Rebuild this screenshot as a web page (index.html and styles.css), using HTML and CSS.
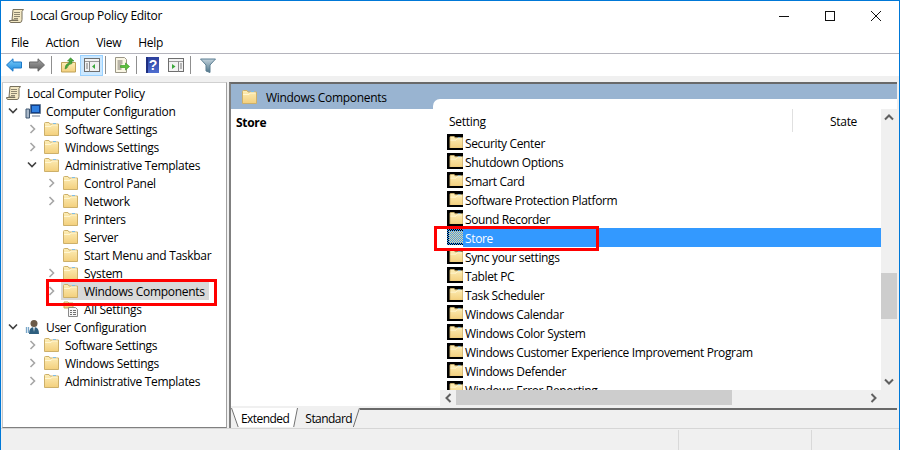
FILE: index.html
```html
<!DOCTYPE html>
<html lang="en">
<head>
<meta charset="utf-8">
<title>Local Group Policy Editor</title>
<link rel="stylesheet" href="styles.css">
</head>
<body>
<svg class="defs" aria-hidden="true">
  <defs>
    <linearGradient id="fg" x1="0" y1="0" x2="0" y2="1"><stop offset="0" stop-color="#fdeeb8"/><stop offset="1" stop-color="#f3cf7c"/></linearGradient>
    <linearGradient id="bk" x1="0" y1="0" x2="0" y2="1"><stop offset="0" stop-color="#7fd0fb"/><stop offset="1" stop-color="#1b87dc"/></linearGradient>
    <linearGradient id="fw" x1="0" y1="0" x2="0" y2="1"><stop offset="0" stop-color="#a6a6a6"/><stop offset="1" stop-color="#5e5e5e"/></linearGradient>
    <linearGradient id="hp" x1="0" y1="0" x2="0" y2="1"><stop offset="0" stop-color="#2b3f9c"/><stop offset="1" stop-color="#4f6ed0"/></linearGradient>
    <linearGradient id="ft" x1="0" y1="0" x2="0" y2="1"><stop offset="0" stop-color="#c3d3dd"/><stop offset="1" stop-color="#4d7488"/></linearGradient>
    <pattern id="dith" width="2" height="2" patternUnits="userSpaceOnUse"><rect width="2" height="2" fill="#3399ff"/><rect width="1" height="1" fill="#f5d98a"/><rect x="1" y="1" width="1" height="1" fill="#f5d98a"/></pattern>
    <pattern id="dithk" width="2" height="2" patternUnits="userSpaceOnUse"><rect width="2" height="2" fill="#3399ff"/><rect width="1" height="1" fill="#000"/><rect x="1" y="1" width="1" height="1" fill="#000"/></pattern>
    <g id="folder">
      <path d="M.5 14.500V2.500q0-1 1-1h3.500l1 1.500h8.500v11.500z" fill="url(#fg)" stroke="#cdb06a"/>
      <path d="M1 5.500h6l1-1.500h5.500" fill="none" stroke="#fff6d2"/>
      <path d="M9 2h3v1H9z" fill="#7fbde8"/>
    </g>
    <symbol id="chev-r" viewBox="0 0 8 10"><path d="M1.500 1l4 4-4 4" fill="none" stroke="#a6a6a6" stroke-width="1.600"/></symbol>
    <symbol id="chev-d" viewBox="0 0 10 8"><path d="M1 1.500l4 4 4-4" fill="none" stroke="#404040" stroke-width="1.600"/></symbol>
    <symbol id="scroll" viewBox="0 0 16 16">
      <path d="M4 1.500h10.500l-1.500 2v8q0 3-2 3H2q-1.500 0-1.500-2h8.500V12H3z" fill="#f3e8c4" stroke="#77705c"/>
      <path d="M5 4.500h6M5 6.500h6M5 8.500h6M5 10.500h4" stroke="#8d8670"/>
    </symbol>
  </defs>
</svg>

<div class="window">
  <header class="titlebar">
    <svg class="title-icon"><use href="#scroll"/></svg>
    <span class="title-text">Local Group Policy Editor</span>
    <div class="caption">
      <span class="cap-btn"><svg width="12" height="12"><path d="M1 6.500h10" stroke="#111"/></svg></span>
      <span class="cap-btn"><svg width="12" height="12"><rect x="1.500" y="1.500" width="9" height="9" fill="none" stroke="#111"/></svg></span>
      <span class="cap-btn"><svg width="12" height="12"><path d="M1 1l10 10M11 1L1 11" stroke="#111"/></svg></span>
    </div>
  </header>

  <nav class="menubar">
    <span class="menu-item">File</span>
    <span class="menu-item">Action</span>
    <span class="menu-item">View</span>
    <span class="menu-item">Help</span>
  </nav>

  <div class="toolbar">
    <span class="tool"><svg width="16" height="14"><path d="M.5 7L7 .8V4h8.500v6H7v3.200z" fill="url(#bk)" stroke="#1c78c8"/></svg></span>
    <span class="tool"><svg width="16" height="14"><path d="M15.500 7L9 .8V4H.5v6H9v3.200z" fill="url(#fw)" stroke="#666"/></svg></span>
    <i class="tool-sep"></i>
    <span class="tool t-up"><svg width="15" height="16"><path d="M.5 15V5.500h14V15z" fill="url(#fg)" stroke="#c0a258"/><path d="M4 12q0-5 4-6V3.500L6.500 4 9.500.8 13 4h-2v2.500Q7 7 6 11z" fill="#4aa63c" stroke="#3a8a30" stroke-width=".6"/></svg></span>
    <span class="tool t-active"><svg width="16" height="14"><rect x=".5" y=".5" width="15" height="13" fill="#f2f2f2" stroke="#6e6e6e"/><path d="M1 3.500h14" stroke="#9a9a9a"/><path d="M5.500 3.500v10" stroke="#8a8a8a"/><path d="M2 6h2M2 8h2M2 10h2" stroke="#7a7a7a"/><path d="M11 6v5L8 8.500z" fill="#3aa83a"/></svg></span>
    <i class="tool-sep s-narrow"></i>
    <span class="tool t-export"><svg width="16" height="16"><path d="M1.500.5h9l2 2v13h-11z" fill="#faf6e4" stroke="#9a9686"/><path d="M3.500 4h5M3.500 6h5M3.500 8h4M3.500 10h4M3.500 12h4" stroke="#77736a"/><path d="M6.500 8.500h5V6l4 3.500-4 3.500v-2.500h-5z" fill="#5cc13c" stroke="#3e9c2a" stroke-width=".7"/></svg></span>
    <i class="tool-sep"></i>
    <span class="tool t-help"><svg width="13" height="16"><rect width="13" height="16" fill="url(#hp)"/><path d="M0 0h2v16H0z" fill="#1e2f80"/><text class="help-q" x="7" y="13">?</text></svg></span>
    <span class="tool t-show"><svg width="16" height="14"><rect x=".5" y=".5" width="15" height="13" fill="#f2f2f2" stroke="#6e6e6e"/><path d="M1 3.500h14" stroke="#9a9a9a"/><path d="M10.500 3.500v10" stroke="#8a8a8a"/><path d="M12 6h2M12 8h2M12 10h2" stroke="#7a7a7a"/><path d="M4 6v5l3.500-2.500z" fill="#3aa83a"/></svg></span>
    <i class="tool-sep"></i>
    <span class="tool t-filter"><svg width="16" height="15"><path d="M.5 1h15l-5.500 6v7.500L6 13V7z" fill="url(#ft)" stroke="#5d7f92"/></svg></span>
  </div>

  <main class="workspace">
    <aside class="tree">
      <div class="node l0"><svg class="ico"><use href="#scroll"/></svg><span>Local Computer Policy</span></div>
      <div class="node l1"><svg class="twist"><use href="#chev-d"/></svg><svg class="ico" viewBox="0 0 16 16"><path d="M5.500 1.500h10v9h-10z" fill="#103f8c" stroke="#6b7f96"/><path d="M7 3h7v6H7z" fill="#2f7fe0"/><path d="M7 12h8v2H7z" fill="#b5bcc6"/><path d="M1 6h3.500v9H1z" fill="#a9b8c9" stroke="#3f5670"/></svg><span>Computer Configuration</span></div>
      <div class="node l2"><svg class="twist-r"><use href="#chev-r"/></svg><svg class="ico" viewBox="0 0 16 16"><use href="#folder"/></svg><span>Software Settings</span></div>
      <div class="node l2"><svg class="twist-r"><use href="#chev-r"/></svg><svg class="ico" viewBox="0 0 16 16"><use href="#folder"/></svg><span>Windows Settings</span></div>
      <div class="node l2"><svg class="twist"><use href="#chev-d"/></svg><svg class="ico" viewBox="0 0 16 16"><use href="#folder"/></svg><span>Administrative Templates</span></div>
      <div class="node l3"><svg class="twist-r"><use href="#chev-r"/></svg><svg class="ico" viewBox="0 0 16 16"><use href="#folder"/></svg><span>Control Panel</span></div>
      <div class="node l3"><svg class="twist-r"><use href="#chev-r"/></svg><svg class="ico" viewBox="0 0 16 16"><use href="#folder"/></svg><span>Network</span></div>
      <div class="node l3 leaf"><svg class="ico" viewBox="0 0 16 16"><use href="#folder"/></svg><span>Printers</span></div>
      <div class="node l3 leaf"><svg class="ico" viewBox="0 0 16 16"><use href="#folder"/></svg><span>Server</span></div>
      <div class="node l3 leaf"><svg class="ico" viewBox="0 0 16 16"><use href="#folder"/></svg><span>Start Menu and Taskbar</span></div>
      <div class="node l3"><svg class="twist-r"><use href="#chev-r"/></svg><svg class="ico" viewBox="0 0 16 16"><use href="#folder"/></svg><span>System</span></div>
      <div class="node l3 current"><svg class="twist-r"><use href="#chev-r"/></svg><div class="current-band"><svg class="ico" viewBox="0 0 16 16"><use href="#folder"/></svg><span>Windows Components</span></div></div>
      <div class="node l3 leaf"><svg class="ico" viewBox="0 0 16 16"><path d="M1 7V1h4l1 1h4v5z" fill="url(#fg)" stroke="#c8a95e"/><path d="M5.500 6.500h7l2 2v7h-9z" fill="#f7f7f7" stroke="#8a8a8a"/><path d="M7 9.500h2M10 9.500h3M7 11.500h2M10 11.500h3M7 13.500h2M10 13.500h3" stroke="#707070"/></svg><span>All Settings</span></div>
      <div class="node l1"><svg class="twist"><use href="#chev-d"/></svg><svg class="ico" viewBox="0 0 16 16"><circle cx="9" cy="4.500" r="3.500" fill="#6b5a48"/><path d="M4 15q0-7 5-7t5 7z" fill="#2f5f7f"/><path d="M1.500 8v6M3.500 8v6" stroke="#7aa7c9" stroke-width="1.300"/><path d="M8 8h2l-1 5z" fill="#dfe8ee"/></svg><span>User Configuration</span></div>
      <div class="node l2"><svg class="twist-r"><use href="#chev-r"/></svg><svg class="ico" viewBox="0 0 16 16"><use href="#folder"/></svg><span>Software Settings</span></div>
      <div class="node l2"><svg class="twist-r"><use href="#chev-r"/></svg><svg class="ico" viewBox="0 0 16 16"><use href="#folder"/></svg><span>Windows Settings</span></div>
      <div class="node l2"><svg class="twist-r"><use href="#chev-r"/></svg><svg class="ico" viewBox="0 0 16 16"><use href="#folder"/></svg><span>Administrative Templates</span></div>
    </aside>

    <section class="pane">
      <div class="pane-body">
        <div class="intro">
          <div class="band"><svg class="band-ico" viewBox="0 0 16 16"><use href="#folder"/></svg><span>Windows Components</span></div>
          <div class="intro-body"><strong>Store</strong></div>
        </div>
        <div class="results">
          <div class="results-main">
            <div class="listing">
              <div class="list-head"><span class="col-setting">Setting</span><span class="col-state">State</span></div>
              <div class="rows">
                <div class="row"><span class="row-ico"><svg viewBox="0 1 14 13"><use href="#folder"/></svg></span><span>Security Center</span></div>
                <div class="row"><span class="row-ico"><svg viewBox="0 1 14 13"><use href="#folder"/></svg></span><span>Shutdown Options</span></div>
                <div class="row"><span class="row-ico"><svg viewBox="0 1 14 13"><use href="#folder"/></svg></span><span>Smart Card</span></div>
                <div class="row"><span class="row-ico"><svg viewBox="0 1 14 13"><use href="#folder"/></svg></span><span>Software Protection Platform</span></div>
                <div class="row"><span class="row-ico"><svg viewBox="0 1 14 13"><use href="#folder"/></svg></span><span>Sound Recorder</span></div>
                <div class="row selected"><span class="row-ico sel-ico"><svg width="16" height="16"><rect width="16" height="16" fill="url(#dithk)"/><rect x="2" y="2" width="14" height="12" fill="url(#dith)"/></svg></span><span class="sel-text">Store</span></div>
                <div class="row"><span class="row-ico"><svg viewBox="0 1 14 13"><use href="#folder"/></svg></span><span>Sync your settings</span></div>
                <div class="row"><span class="row-ico"><svg viewBox="0 1 14 13"><use href="#folder"/></svg></span><span>Tablet PC</span></div>
                <div class="row"><span class="row-ico"><svg viewBox="0 1 14 13"><use href="#folder"/></svg></span><span>Task Scheduler</span></div>
                <div class="row"><span class="row-ico"><svg viewBox="0 1 14 13"><use href="#folder"/></svg></span><span>Windows Calendar</span></div>
                <div class="row"><span class="row-ico"><svg viewBox="0 1 14 13"><use href="#folder"/></svg></span><span>Windows Color System</span></div>
                <div class="row"><span class="row-ico"><svg viewBox="0 1 14 13"><use href="#folder"/></svg></span><span>Windows Customer Experience Improvement Program</span></div>
                <div class="row"><span class="row-ico"><svg viewBox="0 1 14 13"><use href="#folder"/></svg></span><span>Windows Defender</span></div>
                <div class="row"><span class="row-ico"><svg viewBox="0 1 14 13"><use href="#folder"/></svg></span><span>Windows Error Reporting</span></div>
              </div>
            </div>
            <div class="vscroll">
              <span class="sb-btn"><svg width="10" height="7"><path d="M1 5.500l4-4 4 4" fill="none" stroke="#606060" stroke-width="2"/></svg></span>
              <i class="vs-before"></i>
              <i class="vs-thumb"></i>
              <i class="vs-after"></i>
              <span class="sb-btn"><svg width="10" height="7"><path d="M1 1.500l4 4 4-4" fill="none" stroke="#606060" stroke-width="2"/></svg></span>
            </div>
          </div>
          <div class="hs-wrap">
            <div class="hscroll">
              <span class="sb-btn-h"><svg width="7" height="10"><path d="M5.500 1l-4 4 4 4" fill="none" stroke="#606060" stroke-width="2"/></svg></span>
              <i class="hs-thumb"></i>
              <i class="hs-rest"></i>
              <span class="sb-btn-h"><svg width="7" height="10"><path d="M1.500 1l4 4-4 4" fill="none" stroke="#606060" stroke-width="2"/></svg></span>
            </div>
          </div>
        </div>
      </div>
      <div class="tabs">
        <div class="tab active">
          <svg class="slant" width="8" height="20"><path d="M8 0H0l7 20h1z" fill="#fff"/><path d="M.5 0l7 20" stroke="#707070"/></svg>
          <span>Extended</span>
          <svg class="slant" width="5" height="20"><path d="M0 0h5l-4 20H0z" fill="#fff"/><path d="M4.500 0l-4 20" stroke="#707070"/></svg>
        </div>
        <div class="tab">
          <span class="std">Standard</span>
          <svg class="slant" width="8" height="20"><path d="M7.500 0L1 20" stroke="#707070"/></svg>
        </div>
        <div class="tab-rest"></div>
      </div>
    </section>
  </main>

  <footer class="statusbar">
    <div class="st-main"></div>
    <div class="st-mid"></div>
    <div class="st-end"></div>
  </footer>
</div>

<div class="callout callout-tree"></div>
<div class="callout callout-list"></div>
</body>
</html>
```
FILE: styles.css
```css
* { box-sizing: border-box; }
html, body { margin: 0; padding: 0; width: 900px; height: 450px; overflow: hidden; }
body {
  position: relative;
  background: #fff;
  color: #000;
  font-family: "Open Sans", "Liberation Sans", sans-serif;
  font-size: 12px;
  letter-spacing: -0.3px;
}
.defs { position: absolute; width: 0; height: 0; }

.window {
  width: 900px;
  height: 450px;
  display: flex;
  flex-direction: column;
  border: 1px solid #0078d7;
  border-bottom: 0;
}

/* title */
.titlebar { height: 29px; display: flex; align-items: center; padding-left: 8px; flex: none; }
.title-icon { width: 16px; height: 16px; margin-right: 5px; }
.title-text { flex: 1; }
.caption { display: flex; height: 29px; }
.cap-btn { width: 46px; display: flex; align-items: center; justify-content: center; }

/* menu */
.menubar { height: 23px; flex: none; display: flex; align-items: center; padding-left: 3px; padding-top: 1px; }
.menu-item { padding: 0 7px; margin-right: 3px; }

/* toolbar */
.toolbar {
  height: 23px;
  flex: none;
  display: flex;
  align-items: center;
  border-top: 1px solid #b4b4bc;
  padding-left: 5px;
}
.tool { display: flex; align-items: center; justify-content: center; width: 16px; height: 16px; margin-right: 7px; }
.tool:nth-child(2) { margin-right: 6px; }
.tool-sep { width: 1px; height: 18px; background: #8f8f8f; flex: none; margin-right: 9px; }
.tool-sep.s-narrow { margin-right: 8px; }
.t-up { width: 15px; margin-right: 4px; }
.t-active {
  width: 23px;
  height: 21px;
  background: #cce8ff;
  border: 1px solid #99d1ff;
  margin-right: 2px;
}
.t-export { margin-right: 6px; }
.t-help { width: 13px; margin-right: 9px; }
.t-show { margin-right: 6px; }
.t-filter { margin: 0; }
.help-q { fill: #fff; font: bold 14px "Liberation Sans", sans-serif; text-anchor: middle; }

/* workspace */
.workspace {
  flex: 1;
  min-height: 0;
  display: flex;
  background: #f0f0f0;
  padding: 6px 2px 0 1px;
  gap: 2px;
}

/* tree */
.tree {
  width: 225px;
  flex: none;
  background: #fff;
  border: 1px solid #a0a0a0;
  border-top-color: #d0d0d0;
  border-left-color: #c8c8c8;
  border-bottom-color: #808080;
  padding-top: 1px;
}
.node { height: 18px; display: flex; align-items: center; white-space: nowrap; }
.node span { padding-top: 1px; }
.ico { width: 16px; height: 16px; flex: none; margin-right: 5px; }
.twist { width: 10px; height: 8px; flex: none; margin-right: 7px; }
.twist-r { width: 8px; height: 10px; flex: none; margin-right: 7px; }
.l0 { padding-left: 3px; }
.l1 { padding-left: 5px; }
.l2 { padding-left: 26px; }
.l2 .twist { margin-left: -2px; }
.l3 { padding-left: 45px; }
.leaf { padding-left: 60px; }
.current-band { display: flex; align-items: center; height: 18px; background: #d9d9d9; margin-left: -2px; padding-left: 2px; padding-right: 4px; }

/* pane */
.pane {
  flex: 1;
  min-width: 0;
  display: flex;
  flex-direction: column;
  border-top: 2px solid #696969;
  border-left: 2px solid #808080;
  background: #f0f0f0;
}
.pane-body { height: 322px; flex: none; display: flex; background: #99b4d1; }
.intro { width: 202px; flex: none; display: flex; flex-direction: column; }
.band { height: 25px; flex: none; display: flex; align-items: center; padding-left: 11px; padding-top: 1px; }
.band-ico { width: 16px; height: 16px; margin-right: 8px; }
.intro-body { flex: 1; background: #fff; padding: 5px 5px; }
.intro-body strong { font-weight: 700; }

.results { flex: 1; min-width: 0; margin-top: 15px; display: flex; flex-direction: column; }
.results-main { flex: 1; min-height: 0; display: flex; background: #fff; border-top-left-radius: 7px; overflow: hidden; }
.listing { flex: 1; min-width: 0; overflow: hidden; }
.list-head { height: 34px; display: flex; padding: 10px 0 0 16px; }
.col-setting { width: 344px; height: 23px; line-height: 26px; border-right: 1px solid #e0e0e0; }
.col-state { padding-left: 37px; line-height: 26px; }
.rows { padding-left: 14px; letter-spacing: -0.36px; }
.row { height: 19px; display: flex; align-items: flex-start; white-space: nowrap; }
.row > span:last-child { line-height: 19px; padding-top: 1px; }
.row-ico { width: 16px; height: 16px; margin-top: 1px; background: #000; padding: 2px 0 2px 2px; margin-right: 2px; flex: none; display: flex; }
.row-ico svg { width: 14px; height: 12px; display: block; }
.row-ico.sel-ico { background: none; padding: 0; }
.row-ico.sel-ico svg { width: 16px; height: 16px; }
.selected { background: linear-gradient(#3399ff, #3399ff) 16px 0 / 100% 100% no-repeat; color: #fff; }
.sel-text { color: #fff; }

.vscroll { width: 16px; flex: none; margin-top: 10px; display: flex; flex-direction: column; background: #f0f0f0; }
.sb-btn { height: 17px; flex: none; display: flex; align-items: center; justify-content: center; }
.vs-before { height: 147px; flex: none; }
.vs-thumb { height: 46px; flex: none; background: #cdcdcd; }
.vs-after { flex: 1; }

.hs-wrap { height: 16px; flex: none; background: #fff; padding-left: 7px; }
.hscroll { height: 16px; display: flex; background: #f0f0f0; }
.sb-btn-h { width: 16px; flex: none; display: flex; align-items: center; justify-content: center; }
.hs-thumb { width: 276px; flex: none; background: #cdcdcd; margin-bottom: 1px; }
.hs-rest { flex: 1; }
.hscroll .sb-btn-h:last-child { margin-right: 16px; }

/* tabs */
.tabs { flex: 1; display: flex; padding-top: 2px; background: #f0f0f0; }
.tab { height: 19px; display: flex; align-items: flex-start; overflow: hidden; letter-spacing: -0.55px; }
.tab span { line-height: 18px; padding-top: 2px; }
.active span { background: #fff; padding-left: 2px; padding-right: 4px; height: 19px; }
.slant { flex: none; display: block; }
.tab .std { padding-left: 7px; }
.tab-rest { flex: 1; border-top: 2px solid #696969; }

/* status */
.statusbar { height: 22px; flex: none; display: flex; background: #f0f0f0; border-top: 1px solid #d6d6d6; }
.st-main { width: 677px; }
.st-mid { width: 133px; border-left: 1px solid #d9d9d9; margin-top: 1px; }
.st-end { flex: 1; border-left: 1px solid #d9d9d9; margin-top: 1px; }

/* red annotation boxes */
.callout { position: absolute; border: 3px solid #f00; }
.callout-tree { left: 46px; top: 279px; width: 171px; height: 27px; }
.callout-list { left: 434px; top: 226px; width: 165px; height: 25px; }
```
